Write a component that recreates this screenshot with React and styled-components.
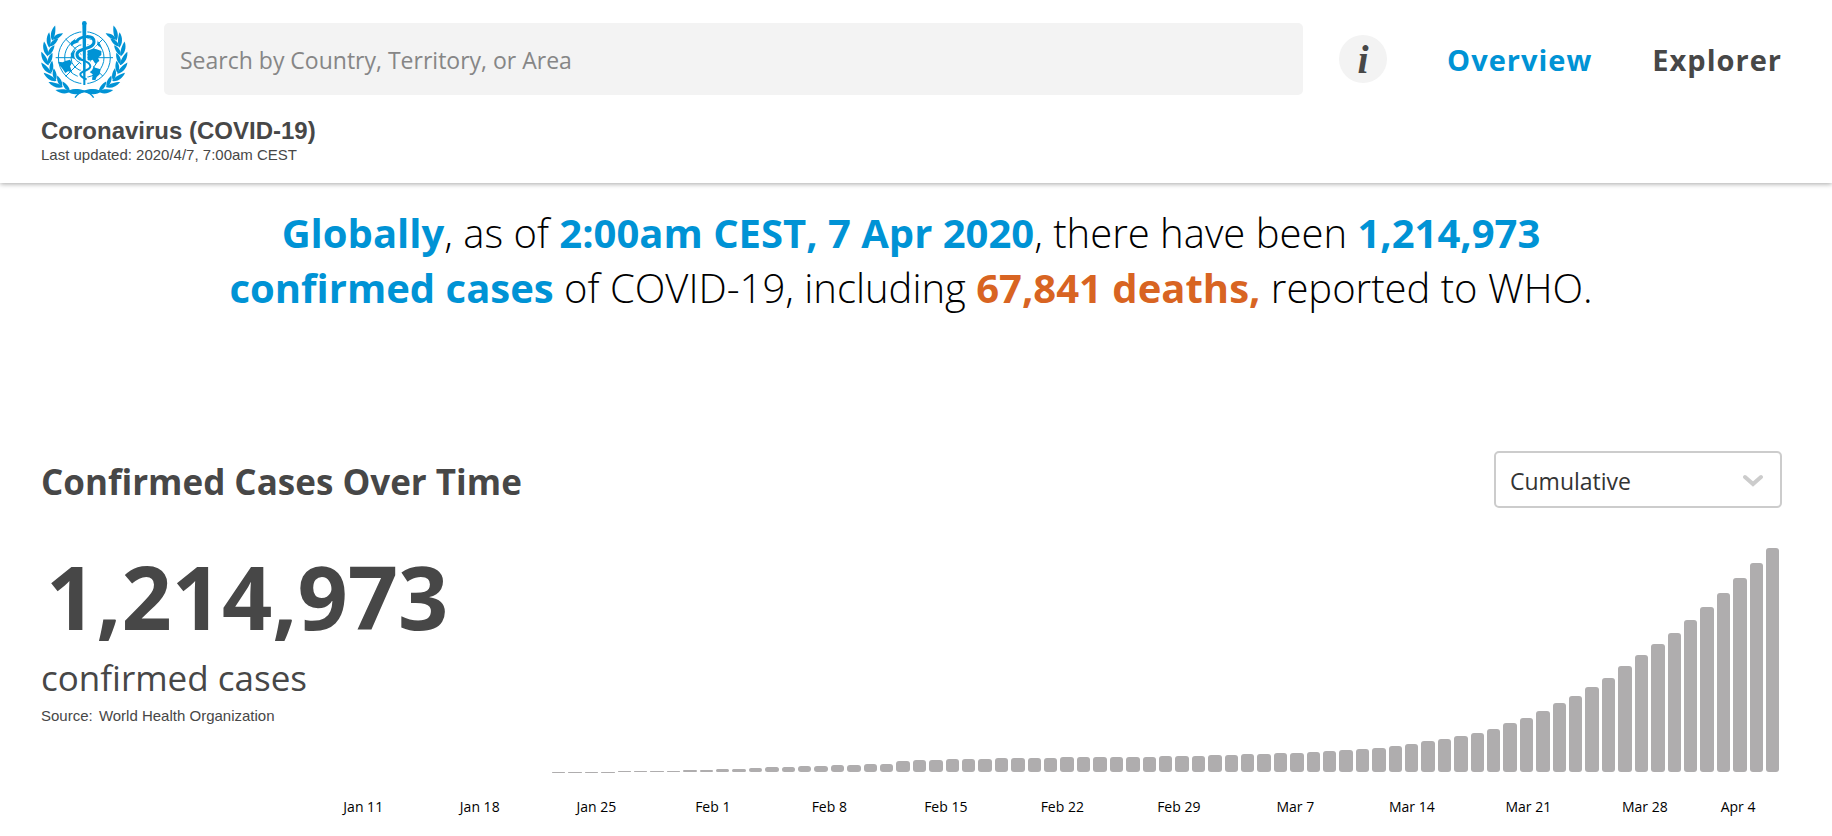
import React from "react";
import styled, { createGlobalStyle } from "styled-components";

// cumulative confirmed cases in thousands, Jan 11 to Apr 6
const cases = [
  0, 0, 0, 0, 0, 0, 0, 0, 0, 0, 0, 0.3, 0.6, 0.8, 1.3, 2, 2.8, 4.6, 6, 7.8,
  9.8, 11.9, 14.5, 17.4, 20.6, 24.5, 28.3, 31.5, 34.9, 37.6, 40.5, 43.1, 45.2,
  60.3, 64.4, 67.1, 69, 71.2, 73.3, 75.2, 75.7, 76.8, 77.8, 78.8, 79.3, 80.2,
  81.1, 82.3, 83.7, 85.4, 87.1, 88.9, 90.9, 93.1, 95.3, 98.2, 101.9, 105.6,
  109.6, 113.7, 118.3, 125, 132.8, 142.5, 153.5, 167.5, 179, 194, 211.5, 234,
  266, 292.9, 332.9, 375.5, 413.5, 462.7, 509.2, 573, 634.8, 693.2, 752, 823.6,
  897.5, 972.6, 1051.6, 1136, 1215,
];
const maxCases = cases[cases.length - 1];

const ticks = [
  "Jan 11",
  "Jan 18",
  "Jan 25",
  "Feb 1",
  "Feb 8",
  "Feb 15",
  "Feb 22",
  "Feb 29",
  "Mar 7",
  "Mar 14",
  "Mar 21",
  "Mar 28",
  "Apr 4",
];

const leafAngles = [24, 38, 52, 66, 80, 94, 108, 120];

function Laurel() {
  return (
    <g>
      {leafAngles.map((deg) => {
        const rad = (deg * Math.PI) / 180;
        const x = 163 - 110 * Math.sin(rad);
        const y = 140 + 110 * Math.cos(rad);
        return (
          <g key={deg} transform={`translate(${x} ${y}) rotate(${180 + deg})`}>
            <path
              transform="rotate(-18)"
              d="M-4 0C6 -10 26 -12 42 -1C28 4 10 6 -4 0Z"
            />
            <path
              transform="rotate(27)"
              d="M0 1C8 -7 24 -7 36 2C24 8 8 8 0 1Z"
            />
          </g>
        );
      })}
      <path d="M112 241C128 232 148 236 163 239C190 230 205 236 214 241C196 246 180 241 163 244C142 252 124 252 112 241Z" />
      <path
        d="M163 240C150 243 141 251 135 260"
        fill="none"
        stroke="#0093d5"
        strokeWidth="4"
      />
    </g>
  );
}

function Logo() {
  return (
    <LogoSvg viewBox="33 30 261 231" role="img" aria-label="WHO">
      <Laurel />
      <g transform="translate(326 0) scale(-1 1)">
        <Laurel />
      </g>
      <circle cx="163" cy="140" r="81" fill="#fff" />
      <g fill="none" stroke="#0093d5" strokeWidth="3">
        <circle cx="163" cy="140" r="78" />
        <circle cx="163" cy="140" r="59" />
        <circle cx="163" cy="140" r="40" />
        <circle cx="163" cy="140" r="21" />
        <path d="M77 140H249M107 84L219 196M219 84L107 196" />
      </g>
      <path d="M84 152L98 154L106 150L120 146L126 156L120 166L126 184L114 181L106 186L98 174L90 164Z" />
      <path d="M122 94L138 82L150 84L146 94L132 99L124 106Z" />
      <path d="M186 78L200 86L210 98L216 112L206 106L197 96L188 90Z" />
      <path d="M172 118L186 112L200 115L214 120L214 132L204 140L208 150L196 158L188 146L172 150Z" />
      <path d="M122 128L134 118L144 122L148 136L154 150L144 154L134 144L124 140Z" />
      <path d="M178 167L196 170L212 175L209 190L200 198L196 208L186 206L188 190L178 182Z" />
      <path
        d="M141 90C152 70 195 68 195 92C196 116 140 108 140 132C140 152 182 148 182 168C182 184 150 178 150 192C150 200 160 202 170 206"
        fill="none"
        stroke="#fff"
        strokeWidth="15"
      />
      <path d="M154 40H172V224H154Z" fill="#fff" />
      <path
        d="M140 91C152 74 191 70 192 92C193 116 141 110 141 131C141 138 146 142 152 145"
        fill="none"
        stroke="#0093d5"
        strokeWidth="9"
      />
      <path
        d="M150 144C162 150 181 152 181 166C181 180 151 178 151 190C151 198 160 201 170 205"
        fill="none"
        stroke="#0093d5"
        strokeWidth="6"
      />
      <circle cx="163" cy="37" r="7" />
      <path d="M157 38H169L166 222H160Z" />
    </LogoSvg>
  );
}

export default function App() {
  const [query, setQuery] = React.useState("");
  const [mode, setMode] = React.useState("Cumulative");

  return (
    <>
      <GlobalStyle />
      <Header>
        <TopBar>
          <Logo />
          <Search
            type="text"
            aria-label="Search"
            placeholder="Search by Country, Territory, or Area"
            value={query}
            onChange={(e) => setQuery(e.target.value)}
          />
          <Nav>
            <InfoButton type="button" aria-label="Information">
              i
            </InfoButton>
            <NavLink href="#overview" $active>
              Overview
            </NavLink>
            <NavLink href="#explorer">Explorer</NavLink>
          </Nav>
        </TopBar>
        <PageTitle>Coronavirus (COVID-19)</PageTitle>
        <SmallText>Last updated: 2020/4/7, 7:00am CEST</SmallText>
      </Header>
      <main>
        <Summary>
          <Blue>Globally</Blue>, as of <Blue>2:00am CEST, 7 Apr 2020</Blue>,
          there have been <Blue>1,214,973 confirmed cases</Blue> of COVID-19,
          including <Orange>67,841 deaths,</Orange> reported to WHO.
        </Summary>
        <Section>
          <SectionHead>
            <SectionTitle>Confirmed Cases Over Time</SectionTitle>
            <SelectWrap>
              <Select
                aria-label="Chart type"
                value={mode}
                onChange={(e) => setMode(e.target.value)}
              >
                <option>Cumulative</option>
                <option>Daily</option>
              </Select>
              <Chevron viewBox="0 0 20 20">
                <path d="M2 6L10 13L18 6" />
              </Chevron>
            </SelectWrap>
          </SectionHead>
          <Panel>
            <Stat>
              <Total>1,214,973</Total>
              <TotalLabel>confirmed cases</TotalLabel>
              <SmallText>
                Source: <Source>World Health Organization</Source>
              </SmallText>
            </Stat>
            <Chart>
              <Bars>
                {cases.map((n, i) => (
                  <Bar key={i} style={{ height: `${(n / maxCases) * 100}%` }} />
                ))}
              </Bars>
              <Axis>
                {ticks.map((tick) => (
                  <span key={tick}>{tick}</span>
                ))}
              </Axis>
            </Chart>
          </Panel>
        </Section>
      </main>
    </>
  );
}

const GlobalStyle = createGlobalStyle`
  * {
    box-sizing: border-box;
  }
  body {
    margin: 0;
    background: #fff;
    color: #474747;
    font-family: "Open Sans", "Noto Sans", sans-serif;
  }
`;

const Header = styled.header`
  height: 183px;
  padding: 20px 50px 0 41px;
  box-shadow: 0 1px 5px rgba(0, 0, 0, 0.35);
`;

const TopBar = styled.div`
  display: flex;
  align-items: center;
  height: 78px;
`;

const LogoSvg = styled.svg`
  flex: none;
  width: 87px;
  height: 77px;
  fill: #0093d5;
`;

const Search = styled.input`
  flex: 1;
  min-width: 0;
  height: 72px;
  margin: 0 36px;
  padding: 2px 16px 0;
  border: 0;
  border-radius: 5px;
  background: #f3f3f3;
  color: #474747;
  font: 400 23px "Open Sans", sans-serif;

  &::placeholder {
    color: #868686;
    opacity: 1;
  }
`;

const Nav = styled.nav`
  display: flex;
  flex: none;
  align-items: center;
  justify-content: space-between;
  width: 443px;
`;

const InfoButton = styled.button`
  width: 48px;
  height: 48px;
  padding: 2px 0 0;
  border: 0;
  border-radius: 50%;
  background: #f3f3f3;
  color: #474747;
  font: italic 700 40px/46px "Liberation Serif", serif;
`;

const NavLink = styled.a`
  color: ${(props) => (props.$active ? "#0093d5" : "#474747")};
  font-size: 29px;
  font-weight: 700;
  letter-spacing: 1px;
  text-decoration: none;
`;

const PageTitle = styled.h1`
  margin: 19px 0 0;
  font: 700 24px/28px "Liberation Sans", Arial, sans-serif;
`;

const SmallText = styled.p`
  margin: 0;
  font: 400 15px/20px "Liberation Sans", Arial, sans-serif;
`;

const Summary = styled.p`
  max-width: 1400px;
  margin: 22px auto 0;
  padding-right: 10px;
  color: #000;
  font-size: 40px;
  font-weight: 300;
  line-height: 55px;
  text-align: center;
`;

const Blue = styled.strong`
  color: #0093d5;
  font-weight: 700;
`;

const Orange = styled(Blue)`
  color: #d86422;
`;

const Section = styled.section`
  padding: 136px 50px 0 41px;
`;

const SectionHead = styled.div`
  display: flex;
  align-items: center;
  justify-content: space-between;
`;

const SectionTitle = styled.h2`
  margin: 0;
  padding-top: 4px;
  font-size: 35px;
  font-weight: 700;
  line-height: 50px;
`;

const SelectWrap = styled.div`
  position: relative;
  width: 288px;
`;

const Select = styled.select`
  display: block;
  width: 100%;
  height: 57px;
  padding: 2px 14px 0;
  border: 2px solid #ccc;
  border-radius: 5px;
  background: #fff;
  color: #333;
  font: 400 23px "Open Sans", sans-serif;
  appearance: none;
`;

const Chevron = styled.svg`
  position: absolute;
  top: 20px;
  right: 19px;
  width: 20px;
  height: 20px;
  fill: none;
  stroke: #ccc;
  stroke-width: 4;
  stroke-linecap: round;
  pointer-events: none;
`;

const Panel = styled.div`
  display: flex;
  padding-top: 40px;
`;

const Stat = styled.div`
  flex: 0 0 264px;
  min-width: 0;
  white-space: nowrap;
`;

const Total = styled.div`
  padding-left: 5px;
  font-size: 88px;
  font-weight: 700;
  line-height: 96px;
`;

const TotalLabel = styled.div`
  padding-top: 6px;
  font-size: 35px;
  line-height: 56px;
`;

const Source = styled.span`
  margin-left: 2px;
`;

const Chart = styled.div`
  flex: 1;
  min-width: 0;
`;

const Bars = styled.div`
  display: flex;
  align-items: flex-end;
  gap: 3px;
  height: 224px;
  padding: 0 2px 0 50px;
`;

const Bar = styled.div`
  flex: 1;
  border-radius: 3px;
  background: #afadae;
`;

const Axis = styled.div`
  display: grid;
  grid-template-columns: repeat(12, 10fr) 6fr;
  padding: 23px 9px 0 0;
  color: #000;
  font-size: 14px;
  line-height: 24px;
  text-align: center;
`;
